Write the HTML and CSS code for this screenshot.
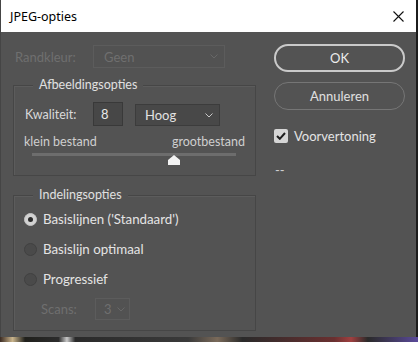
FILE: index.html
```html
<!DOCTYPE html>
<html lang="nl">
<head>
    <meta charset="UTF-8">
    <meta name="viewport" content="width=device-width, initial-scale=1.0">
    <title>JPEG-opties</title>
    <link rel="stylesheet" href="styles.css">
</head>
<body>
    <div class="window">
        <div class="titlebar">
            <span class="title">JPEG-opties</span>
            <svg class="close" width="11" height="11" viewBox="0 0 11 11">
                <path d="M0.5 0.5 L10.5 10.5 M10.5 0.5 L0.5 10.5" stroke="#111" stroke-width="1.1" fill="none"/>
            </svg>
        </div>

        <div class="content">
            <div class="main">
                <!-- matte kleur, uitgeschakeld -->
                <div class="row matte">
                    <span class="label off">Randkleur:</span>
                    <div class="select off wide">
                        <span>Geen</span>
                        <svg class="chev" width="8" height="5" viewBox="0 0 8 5"><path d="M0.5 0.5 L4 4 L7.5 0.5" stroke="#676767" fill="none"/></svg>
                    </div>
                </div>

                <div class="group quality">
                    <div class="group-title">Afbeeldingsopties</div>
                    <div class="row">
                        <span class="label short">Kwaliteit:</span>
                        <div class="field">8</div>
                        <div class="select mid">
                            <span>Hoog</span>
                            <svg class="chev" width="8" height="5" viewBox="0 0 8 5"><path d="M0.5 0.5 L4 4 L7.5 0.5" stroke="#c8c8c8" fill="none"/></svg>
                        </div>
                    </div>
                    <div class="scale">
                        <span>klein bestand</span>
                        <span>grootbestand</span>
                    </div>
                    <div class="slider">
                        <div class="track"></div>
                        <svg class="thumb" width="12" height="10" viewBox="0 0 12 10"><path d="M6 0 L12 5 L12 10 L0 10 L0 5 Z" fill="#f2f2f2"/></svg>
                    </div>
                </div>

                <div class="group format">
                    <div class="group-title">Indelingsopties</div>
                    <div class="radio checked"><span class="dot"></span>Basislijnen ('Standaard')</div>
                    <div class="radio"><span class="dot"></span>Basislijn optimaal</div>
                    <div class="radio"><span class="dot"></span>Progressief</div>
                    <div class="row scans">
                        <span class="label off">Scans:</span>
                        <div class="select off tiny">
                            <span>3</span>
                            <svg class="chev" width="8" height="5" viewBox="0 0 8 5"><path d="M0.5 0.5 L4 4 L7.5 0.5" stroke="#676767" fill="none"/></svg>
                        </div>
                    </div>
                </div>
            </div>

            <div class="side">
                <div class="btn primary">OK</div>
                <div class="btn">Annuleren</div>
                <div class="check">
                    <span class="box">
                        <svg width="10" height="8" viewBox="0 0 10 8"><path d="M1 4 L3.8 6.8 L9 1" stroke="#1e1e1e" stroke-width="2" fill="none"/></svg>
                    </span>
                    Voorvertoning
                </div>
                <div class="size">--</div>
            </div>
        </div>
    </div>
    <div class="desktop"></div>
</body>
</html>
```

FILE: styles.css
```css
*{
    margin:0;
    padding:0;
    box-sizing: border-box;
}

html, body{
    width: 418px;
    height: 342px;
    overflow: hidden;
}

body{
    background-color: #1c1c1c;
    font-family: Lato, "Noto Sans", sans-serif;
    font-size: 13px;
    color: #dadada;
}

.window{
    width: 416px;
    height: 337px;
    background-color: #535353;
    border-left: 1px solid #454545;
    display: flex;
    flex-direction: column;
}

.titlebar{
    height: 32px;
    flex-shrink: 0;
    background-color: #fff;
    color: #000;
    font-family: "Noto Sans", "Open Sans", sans-serif;
    font-size: 12.5px;
    display: flex;
    align-items: center;
    justify-content: space-between;
    padding: 0 12px 0 9px;
}

.content{
    display: flex;
    padding-left: 12px;
}

.main{
    width: 243px;
}

.row{
    display: flex;
    align-items: center;
}

.matte{
    margin-top: 13px;
    height: 23px;
}

.label{
    width: 80px;
    padding-left: 2px;
    flex-shrink: 0;
}

.label.short{
    width: 68px;
    padding-left: 0;
    font-size: 12.5px;
}

.off{
    color: #6f6f6f;
}

/* keuzelijsten */
.select{
    display: flex;
    align-items: center;
    justify-content: space-between;
    background-color: #484848;
    border: 1px solid #3c3c3c;
    padding: 0 6px 0 8px;
}

.select.off{
    background-color: #525252;
    border-color: #5c5c5c;
}

.select.wide{
    width: 132px;
    height: 23px;
    padding-left: 10px;
}

.select.mid{
    width: 85px;
    height: 22px;
    margin-left: 12px;
    margin-top: 2px;
    padding-left: 9px;
    color: #e2e2e2;
}

.select.tiny{
    width: 35px;
    height: 22px;
    padding-left: 8px;
    padding-right: 4px;
}

.field{
    width: 30px;
    height: 24px;
    line-height: 22px;
    background-color: #474747;
    border: 1px solid #393939;
    padding-left: 7px;
    color: #e8e8e8;
}

/* groepen */
.group{
    border: 1px solid #464646;
    box-shadow: 1px 1px 0 #5c5c5c inset;
}

.group-title{
    width: fit-content;
    margin: -10px 0 0 19px;
    padding: 0 6px;
    line-height: 18px;
    font-size: 12.5px;
    background-color: #535353;
    color: #e0e0e0;
}

.quality{
    margin-top: 17px;
    padding-bottom: 10px;
}

.quality .row{
    margin-top: 8px;
    height: 24px;
    padding-left: 11px;
}

.scale{
    display: flex;
    justify-content: space-between;
    margin-top: 8px;
    padding: 0 10px 0 10px;
    line-height: 16px;
    font-size: 12.5px;
    color: #cfcfcf;
}

.slider{
    position: relative;
    height: 12px;
    margin-left: 18px;
    width: 204px;
}

.track{
    margin-top: 3px;
    height: 3px;
    background-color: #6d6d6d;
}

.thumb{
    position: absolute;
    left: 136px;
    top: 2px;
}

.format{
    margin-top: 19px;
    padding-bottom: 6px;
}

.radio{
    display: flex;
    align-items: center;
    gap: 6px;
    height: 30px;
    padding-left: 10px;
    font-size: 13.3px;
    color: #e4e4e4;
}

.radio .dot{
    width: 13px;
    height: 13px;
    border-radius: 50%;
    background-color: #4a4a4a;
    border: 1px solid #414141;
    display: flex;
    align-items: center;
    justify-content: center;
}

.radio.checked .dot{
    background-color: #d2d2d2;
    border-color: #c4c4c4;
}

.radio.checked .dot:after{
    content: "";
    width: 5px;
    height: 5px;
    border-radius: 50%;
    background-color: #2a2a2a;
}

.scans{
    height: 30px;
    padding-left: 27px;
}

.scans .label{
    width: 54px;
    padding-left: 0;
}

/* rechterkolom */
.side{
    margin-left: 18px;
    width: 131px;
    display: flex;
    flex-direction: column;
}

.btn{
    height: 28px;
    border-radius: 14px;
    border: 1.5px solid #767676;
    display: flex;
    align-items: center;
    justify-content: center;
    color: #e0e0e0;
    margin-top: 10px;
}

.btn.primary{
    margin-top: 12px;
    border: 2px solid #cacaca;
    color: #ececec;
}

.check{
    display: flex;
    align-items: center;
    gap: 6px;
    margin-top: 19px;
    height: 14px;
    color: #e4e4e4;
}

.check .box{
    width: 14px;
    height: 14px;
    border-radius: 2px;
    background-color: #d6d6d6;
    display: flex;
    align-items: center;
    justify-content: center;
}

.size{
    margin-top: 19px;
    line-height: 16px;
    padding-left: 1px;
    color: #cfcfcf;
}

.desktop{
    height: 5px;
    background: linear-gradient(90deg, #3a2a22 0, #c9b48c 3%, #20201c 6%, #2c2c2c 14%, #c8c8c8 16%, #2a2a2a 18%, #3a3a3a 45%, #7a6a5a 52%, #2a2a2a 58%, #6a3030 80%, #a04040 84%, #2a2a2a 88%, #5a4a9a 100%);
}
```
